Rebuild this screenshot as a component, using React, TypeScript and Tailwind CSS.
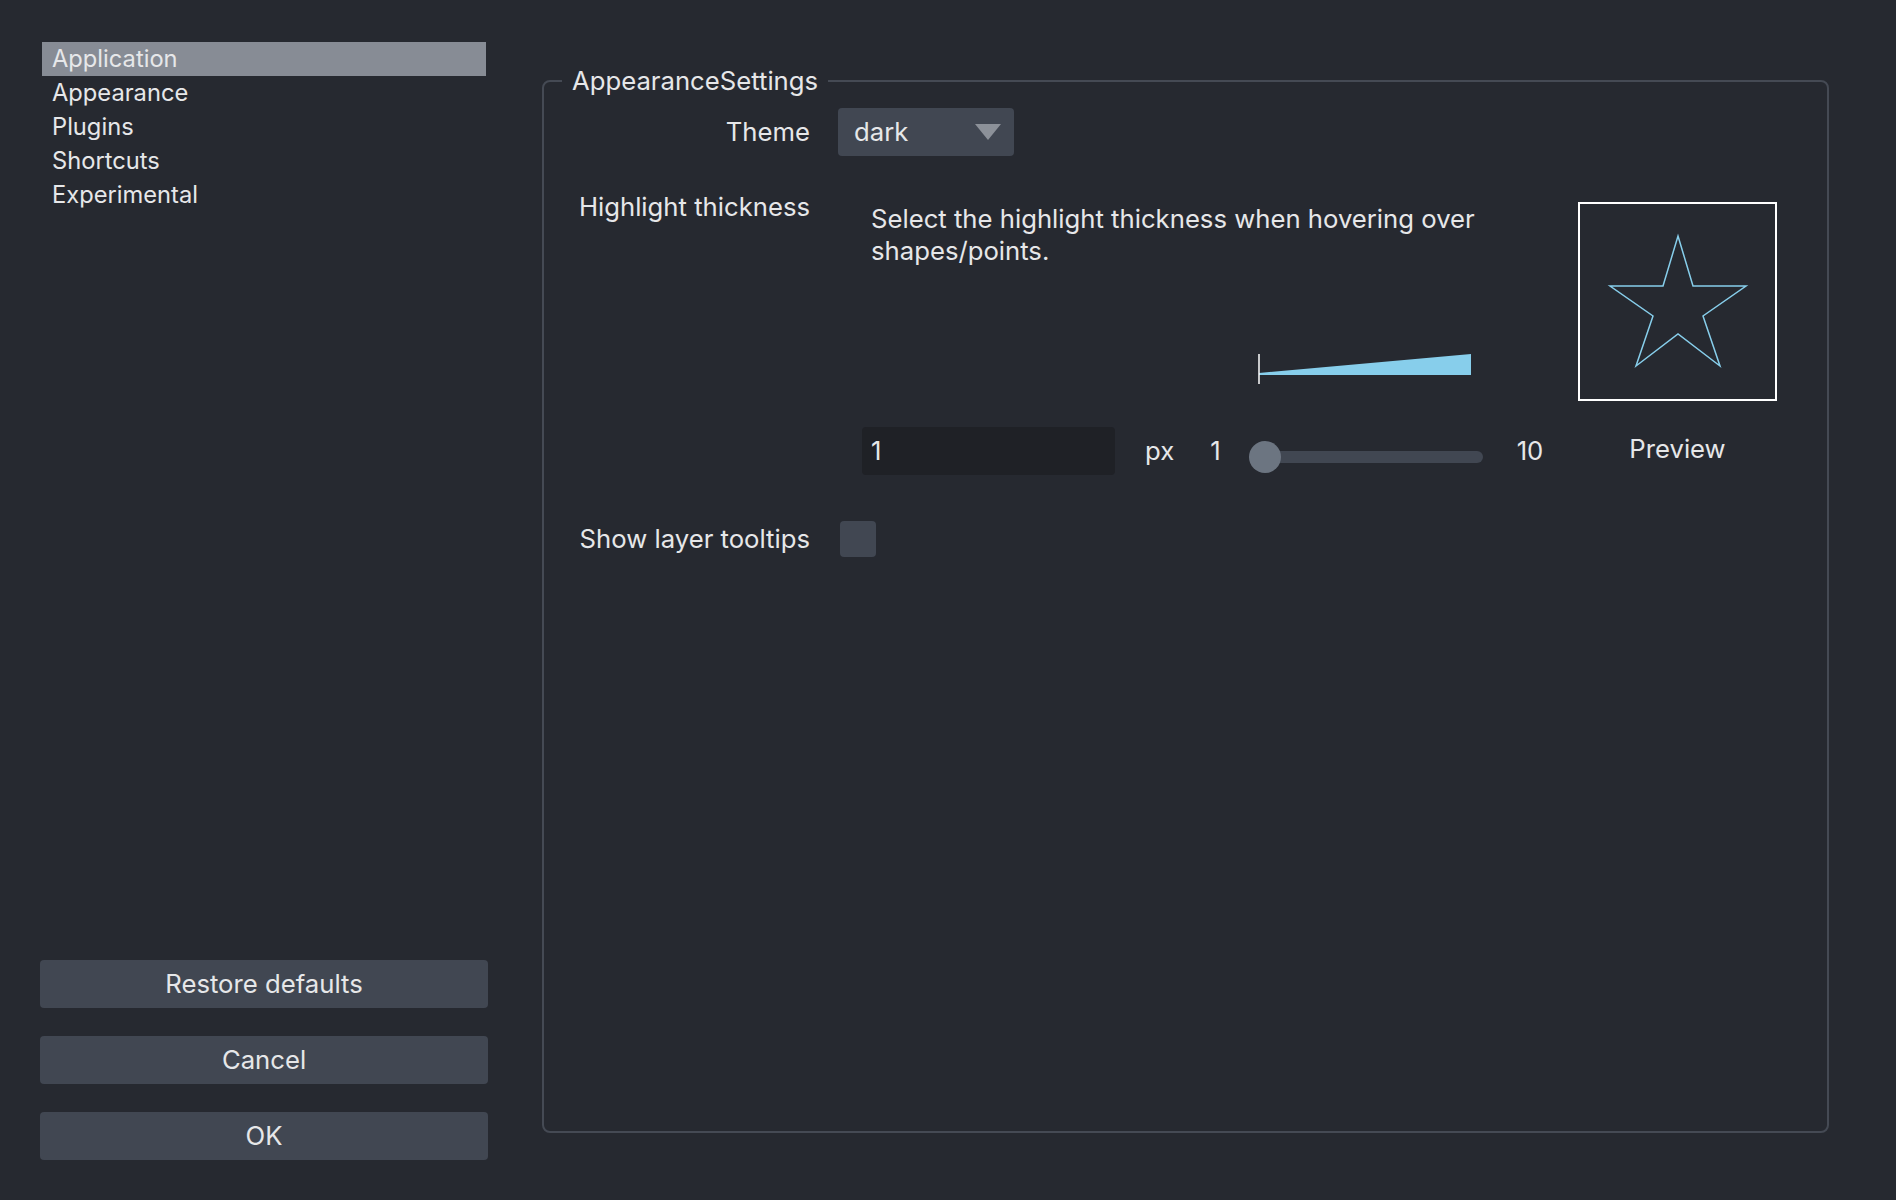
import React from 'react';

const navItems = ['Application', 'Appearance', 'Plugins', 'Shortcuts', 'Experimental'];
const actions = ['Restore defaults', 'Cancel', 'OK'];

function Star() {
  return (
    <div className="h-[199px] w-[199px] border-2 border-white">
      <svg width="195" height="195" viewBox="2 2 195 195">
        <polygon
          points="100,34 115,84 168,84 125,114 142,164 100,132 58,164 75,114 32,84 85,84"
          fill="none"
          stroke="#87ceeb"
          strokeWidth="1.5"
        />
      </svg>
    </div>
  );
}

function Slider() {
  return (
    <div className="relative mt-[12px] flex h-[32px] w-[234px] items-center">
      <div className="ml-[16px] h-[12px] flex-1 rounded-full bg-[#414752]" />
      <div className="absolute left-0 top-0 h-[32px] w-[32px] rounded-full bg-[#6c7581]" />
    </div>
  );
}

export default function App() {
  return (
    <div className="flex h-[1200px] w-full gap-[54px] bg-[#262930] pb-[40px] pl-[40px] pr-[67px] pt-[42px] font-['Inter',sans-serif] text-[#e6e7e9]">
      <aside className="flex w-[448px] shrink-0 flex-col justify-between">
        <ul className="mx-[2px]">
          {navItems.map((item, i) => (
            <li
              key={item}
              className={`flex h-[34px] items-center pl-[10px] text-[23.7px] ${i === 0 ? 'bg-[#878c95]' : ''}`}
            >
              {item}
            </li>
          ))}
        </ul>
        <div className="flex flex-col gap-[28px]">
          {actions.map((label) => (
            <button key={label} className="h-[48px] rounded-[4px] bg-[#414752] text-[25.7px] text-[#e6e7e9]">
              {label}
            </button>
          ))}
        </div>
      </aside>

      <main className="flex flex-1 flex-col pb-[27px] pt-[23px]">
        <fieldset className="flex-1 rounded-[8px] border-2 border-[#454a54]">
          <legend className="ml-[18px] px-[10px] text-[25.7px] leading-[32px]">AppearanceSettings</legend>
          <div className="flex flex-col pl-[18px] pt-[11px] text-[25.7px] leading-[32px]">
            {/* theme */}
            <div className="flex items-center gap-[28px]">
              <div className="w-[248px] text-right">Theme</div>
              <div className="flex h-[48px] w-[176px] items-center justify-between rounded-[4px] bg-[#414752] pl-[16px] pr-[13px]">
                <span>dark</span>
                <svg width="26" height="16" viewBox="0 0 26 16">
                  <polygon points="0,0 26,0 13,16" fill="#8c9199" />
                </svg>
              </div>
            </div>

            {/* highlight thickness */}
            <div className="mt-[35px] flex gap-[28px]">
              <div className="w-[248px] text-right">Highlight thickness</div>
              <div className="ml-[24px] flex gap-[33px] pt-[11px]">
                <div className="flex w-[683px] flex-col">
                  <p className="w-[640px] pl-[9px] pt-[1px]">
                    Select the highlight thickness when hovering over shapes/points.
                  </p>
                  <svg className="ml-[396px] mt-[87px]" width="214" height="30" viewBox="0 0 214 30">
                    <polygon points="1,21 1,19 213,0 213,21" fill="#87ceeb" />
                    <line x1="1" y1="0" x2="1" y2="30" stroke="#ffffff" strokeWidth="1.5" />
                  </svg>
                  <div className="mt-[43px] flex h-[48px] items-center">
                    <div className="flex h-[48px] w-[253px] items-center rounded-[4px] bg-[#1f2126] pl-[9px]">1</div>
                    <span className="ml-[30px]">px</span>
                    <span className="ml-[36px]">1</span>
                    <div className="ml-[28px]">
                      <Slider />
                    </div>
                    <span className="ml-[34px]">10</span>
                  </div>
                </div>
                <div className="flex w-[199px] flex-col items-center">
                  <Star />
                  <div className="mt-[32px]">Preview</div>
                </div>
              </div>
            </div>

            {/* tooltips */}
            <div className="mt-[46px] flex items-center gap-[28px]">
              <div className="w-[248px] text-right">Show layer tooltips</div>
              <div className="ml-[2px] h-[36px] w-[36px] rounded-[4px] bg-[#414752]" />
            </div>
          </div>
        </fieldset>
      </main>
    </div>
  );
}
